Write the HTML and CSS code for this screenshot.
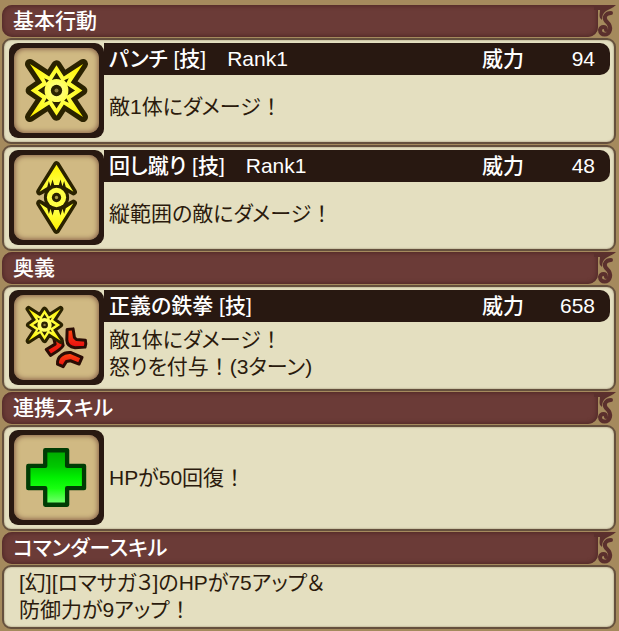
FILE: index.html
```html
<!DOCTYPE html>
<html lang="ja">
<head>
  <meta charset="UTF-8" />
  <meta name="viewport" content="width=device-width, initial-scale=1.0" />
  <title>スキル一覧</title>
  <link rel="stylesheet" href="styles.css">
</head>
<body>
  <svg class="defs" aria-hidden="true">
    <defs>
      <radialGradient id="yellow" gradientUnits="userSpaceOnUse" cx="0" cy="0" r="100">
        <stop offset="0" stop-color="#ffff9c" />
        <stop offset="0.45" stop-color="#ffff3c" />
        <stop offset="1" stop-color="#fff200" />
      </radialGradient>
      <linearGradient id="green" x1="0" y1="0" x2="0" y2="1">
        <stop offset="0" stop-color="#00a800" />
        <stop offset="0.3" stop-color="#00c800" />
        <stop offset="0.5" stop-color="#00f000" />
        <stop offset="0.7" stop-color="#18ff10" />
        <stop offset="1" stop-color="#7cff78" />
      </linearGradient>
      <linearGradient id="red" x1="0" y1="0" x2="0" y2="1">
        <stop offset="0" stop-color="#ff4a10" />
        <stop offset="1" stop-color="#e80c10" />
      </linearGradient>
      <symbol id="star" viewBox="-128 -128 256 256" overflow="visible">
        <path d="M0-76 22-42 80-80 43-24 78 0 43 24 80 80 22 42 0 76-22 42-80 80-43 24-78 0-43-24-80-80-22-42Z" fill="#2a2200" stroke="#2a2200" stroke-width="30" stroke-linejoin="round" />
        <path d="M0-76 22-42 80-80 43-24 78 0 43 24 80 80 22 42 0 76-22 42-80 80-43 24-78 0-43-24-80-80-22-42Z" fill="url(#yellow)" />
        <path d="M0-54 14-32Q0-38-14-32ZM0 54 14 32Q0 38-14 32ZM-56 0-33-15Q-39 0-33 15ZM56 0 33-15Q39 0 33 15Z" fill="#2a2200" />
        <path d="M23-31 37-37 30-23ZM-23-31-37-37-30-23ZM23 31 37 37 30 23ZM-23 31-37 37-30 23Z" fill="#2a2200" />
        <circle r="17" fill="#2a2200" />
        <circle r="6" fill="#8a7a40" />
      </symbol>
      <symbol id="ornament" viewBox="0 0 22 32">
        <path d="M0 0H22C19 3 15 4 12 6C9 8 8 11 8 15L6 13C5 10 6 8 6 5H0Z" fill="#5b302d" />
        <path d="M17 8C12 8 9 12 12 16C14 18 17 20 16 25C15 31 6 31 6 25C7 21 12 21 12 25" fill="none" stroke="#5b302d" stroke-width="4" stroke-linecap="round" />
      </symbol>
    </defs>
  </svg>

  <main class="skills">
    <header class="heading">
      <h2 class="heading-bar">基本行動</h2>
      <svg class="heading-end" aria-hidden="true"><use href="#ornament" /></svg>
    </header>

    <section class="panel">
      <div class="icon">
        <svg viewBox="-128 -128 256 256" aria-hidden="true">
          <use href="#star" x="-128" y="-128" width="256" height="256" />
        </svg>
      </div>
      <div class="detail">
        <div class="title">
          <h3 class="name">パンチ [技]　Rank1</h3>
          <span class="label">威力</span>
          <span class="power">94</span>
        </div>
        <p class="text">敵1体にダメージ<span class="wide">！</span></p>
      </div>
    </section>

    <section class="panel">
      <div class="icon">
        <svg viewBox="-128 -128 256 256" aria-hidden="true">
          <g fill="#2a2200" stroke="#2a2200" stroke-width="21" stroke-linejoin="round">
            <path d="M0-99 51-17 32-28H-32L-51-17Z" />
            <path d="M0 99 51 17 32 28H-32L-51 17Z" />
          </g>
          <g fill="url(#yellow)">
            <path d="M0-99 51-17 28-32 23-50 18-34 12-54 7-38H-7L-12-54-18-34-23-50-28-32-51-17Z" />
            <path d="M0 99 51 17 28 32 23 50 18 34 12 54 7 38H-7L-12 54-18 34-23 50-28 32-51 17Z" />
          </g>
          <circle r="38" fill="#2a2200" />
          <circle r="29" fill="#ffff45" />
          <circle r="14" fill="#2a2200" />
          <circle r="5" fill="#a89c48" />
        </svg>
      </div>
      <div class="detail">
        <div class="title">
          <h3 class="name">回し蹴り [技]　Rank1</h3>
          <span class="label">威力</span>
          <span class="power">48</span>
        </div>
        <p class="text">縦範囲の敵にダメージ<span class="wide">！</span></p>
      </div>
    </section>

    <header class="heading">
      <h2 class="heading-bar">奥義</h2>
      <svg class="heading-end" aria-hidden="true"><use href="#ornament" /></svg>
    </header>

    <section class="panel">
      <div class="icon">
        <svg viewBox="-128 -128 256 256" aria-hidden="true">
          <g fill="url(#red)" stroke="#2a0c04" stroke-width="9" stroke-linejoin="round">
            <path d="M-12-22 16 4 20 24Q16 34-18 54L-31 36-4 20-8 4Z" />
            <path d="M32-24 50-26 54 0 60 6 87 8Q90 20 86 29L56 31Q32 28 31 8Z" />
            <path d="M3 80Q2 62 14 54Q24 44 42 45L77 60 68 80 42 70 30 72 20 88Z" />
          </g>
          <use href="#star" x="-113" y="-115" width="154" height="154" />
        </svg>
      </div>
      <div class="detail">
        <div class="title">
          <h3 class="name">正義の鉄拳 [技]</h3>
          <span class="label">威力</span>
          <span class="power">658</span>
        </div>
        <p class="text">敵1体にダメージ<span class="wide">！</span><br>怒りを付与<span class="wide">！</span>(3ターン)</p>
      </div>
    </section>

    <header class="heading">
      <h2 class="heading-bar">連携スキル</h2>
      <svg class="heading-end" aria-hidden="true"><use href="#ornament" /></svg>
    </header>

    <section class="panel">
      <div class="icon">
        <svg viewBox="-128 -128 256 256" aria-hidden="true">
          <path d="M-34-82H32V-35H83V32H32V82H-34V32H-85V-35H-34Z" fill="url(#green)" stroke="#003c04" stroke-width="13" stroke-linejoin="round" />
        </svg>
      </div>
      <div class="detail">
        <p class="text">HPが50回復<span class="wide">！</span></p>
      </div>
    </section>

    <header class="heading">
      <h2 class="heading-bar">コマンダースキル</h2>
      <svg class="heading-end" aria-hidden="true"><use href="#ornament" /></svg>
    </header>

    <section class="panel commander">
      <p class="text">[幻][ロマサガ３]のHPが75アップ＆<br>防御力が9アップ<span class="wide">！</span></p>
    </section>
  </main>
</body>
</html>
```
FILE: styles.css
```css
:root {
  --wood: #a58a5d;
  --cream: #e4dfc0;
  --wine: #6b3b37;
  --wine-dark: #4f2726;
  --dark: #281811;
}
* {
  box-sizing: border-box;
}
body {
  margin: 0;
  padding: 5px 3px 3px 2px;
  background: var(--wood);
  color: #2b1b0d;
  font-family: "Liberation Sans", "Noto Sans CJK JP", sans-serif;
  font-size: 21px;
  line-height: 27px;
  font-feature-settings: "palt";
}
h2, h3, p {
  margin: 0;
  font-size: inherit;
}
.defs {
  position: absolute;
  width: 0;
  height: 0;
}
.skills {
  display: flex;
  flex-direction: column;
  gap: 1px;
}
.heading {
  display: flex;
  height: 32px;
}
.heading-bar {
  flex: 1;
  padding-left: 11px;
  line-height: 32px;
  font-weight: 500;
  color: #fff;
  background: var(--wine);
  border-radius: 10px 0 10px 10px;
  box-shadow: inset 0 0 4px 1px var(--wine-dark);
}
.heading-end {
  width: 22px;
  height: 32px;
  margin-left: -4px;
}
.panel {
  display: flex;
  min-height: 106px;
  padding: 3px 4px 3px 5px;
  background: var(--cream);
  border: 2px solid #65503d;
  border-radius: 9px;
  box-shadow: inset 0 0 2px #8f8065;
}
.icon {
  flex: none;
  width: 95px;
  height: 95px;
  padding: 5px;
  background: var(--dark);
  border-radius: 9px;
}
.icon svg {
  display: block;
  width: 85px;
  height: 85px;
  background: #d0b983;
  border-radius: 10px;
  box-shadow: inset 0 0 5px 1px #866048;
}
.detail {
  flex: 1;
  display: flex;
  flex-direction: column;
}
.title {
  display: flex;
  height: 32px;
  padding: 0 15px 0 5px;
  line-height: 32px;
  color: #fff;
  background: var(--dark);
  border-radius: 0 10px 10px 0;
}
.name {
  flex: 1;
  font-weight: 500;
}
.label {
  font-weight: 500;
}
.power {
  width: 71px;
  text-align: right;
}
.text {
  margin: auto 0;
  padding: 0 0 2px 5px;
}
.wide {
  font-feature-settings: normal;
}
.commander {
  min-height: 63px;
  padding: 2px 10px;
}
```
